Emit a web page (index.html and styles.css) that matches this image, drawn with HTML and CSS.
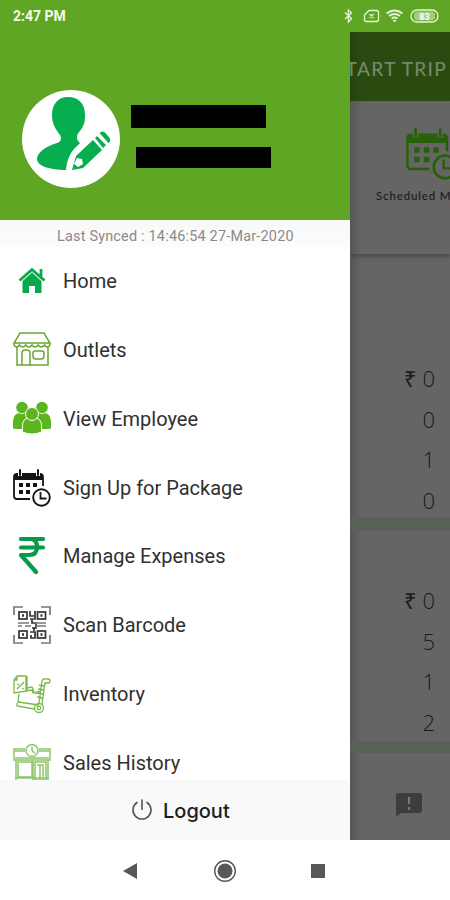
FILE: index.html
```html
<!DOCTYPE html>
<html lang="en">
<head>
<meta charset="utf-8">
<title>Menu</title>
<link rel="stylesheet" href="styles.css">
</head>
<body>
<header class="status">
  <span class="time">2:47 PM</span>
  <svg class="status-icons" width="100" height="18" viewBox="0 0 100 18" fill="none" stroke="#e6f5d8" stroke-width="1.3">
    <path d="M5 5.500l6.500 6-3.200 3.500v-12l3.200 3-6.500 6" />
    <path d="M29 3.500h7.500q2 0 2 2v7q0 2-2 2h-10q-2 0-2-2V8zM29.500 7l4 4m0-4l-4 4" />
    <path d="M46.500 6.500q8-6 16 0M49 9q5.500-4 11 0M51.500 11.500q3-2 6 0" stroke-width="1.800"/>
    <path d="M54.500 15.500l-2-2.500h4z" fill="#e6f5d8" stroke="none"/>
    <rect x="71" y="3" width="27" height="12" rx="6"/>
    <rect x="74" y="4.500" width="21" height="9" rx="4" fill="#a5cd82" stroke="none"/>
    <text x="84.500" y="12.500" class="battery">83</text>
  </svg>
</header>

<div class="stage">
  <aside class="drawer">
    <div class="profile">
      <svg class="avatar" width="98" height="98" viewBox="0 0 98 98">
        <circle cx="49" cy="49" r="49" fill="#fff"/>
        <path fill="#07ae50" d="M46 7C36 7 30 14 30 25c0 9 4 15 8 20 2 3 1 7-3 8-10 3-20 9-20 16 0 7 13 11 29 11 1-9 3-15 8-21l6-6c-2-2-3-3-3-6 0-4 3-5 5-9 3-5 3-8 3-13C63 14 57 7 46 7z"/>
        <path fill="#07ae50" d="M54 66L71 50l9 10-19 18-11 2zM73 48l2-2 9 9-3 3zM77.500 43q3-3 6 0l4 5q2 3-1 5z"/>
        <path fill="#fff" d="M55 68l5 1 1 5-5 3-4-3z"/>
      </svg>
      <div class="redactions"><i class="redacted name"></i><i class="redacted role"></i></div>
    </div>
    <div class="synced"><span>Last Synced : 14:46:54 27-Mar-2020</span></div>

    <nav class="menu">
      <a class="item">
        <svg class="icon" viewBox="0 0 38 38"><path fill="#08a94a" d="M19 9.500l9.500 9V31H22v-7h-6v7H9.500V18.500z"/><path d="M6.500 18.500L19 7.500l12.500 11M28 7v8" fill="none" stroke="#08a94a" stroke-width="2.800"/><path d="M7.500 20.500L19 10.300l11.500 10.200" fill="none" stroke="#fff" stroke-width=".8"/></svg>
        <span>Home</span></a>
      <a class="item">
        <svg class="icon" viewBox="0 0 38 38" fill="none" stroke="#67a82f" stroke-width="1.500"><path d="M7 2h24l6 10H1zM1 12v2q2.500 4 5.500 0 3 4 6.200 0 3 4 6.300 0 3 4 6.200 0 3 4 6.300 0 3 4 5.500 0v-2M4 16.500V34h31V16.500M9 34V22q0-3 3-3h2q3 0 3 3v12M22 20h7q2 0 2 2v3q0 3-3 3h-5q-3 0-3-3v-3q0-2 2-2z"/></svg>
        <span>Outlets</span></a>
      <a class="item">
        <svg class="icon" viewBox="0 0 38 38" fill="#5bb51e"><circle cx="9" cy="7.500" r="5.800"/><circle cx="29" cy="7.500" r="5.800"/><path d="M0 28v-6q0-8 6-9 3 2 6 0l6 3v13H6q-6 0-6-1zM38 28v-6q0-8-6-9-3 2-6 0l-6 3v13h12q6 0 6-1z"/><g stroke="#fff"><path d="M9.500 32V26q0-7.500 6-8h7q6 .5 6 8v6q-9.500 4-19 0z"/><circle cx="19" cy="14" r="6.500"/></g></svg>
        <span>View Employee</span></a>
      <a class="item">
        <svg class="icon" viewBox="0 0 38 38"><use href="#schedule"/></svg>
        <span>Sign Up for Package</span></a>
      <a class="item">
        <svg class="icon" viewBox="0 0 38 38" fill="none" stroke="#079a49" stroke-width="4.200" stroke-linecap="round" stroke-linejoin="round"><path d="M8 2h22M8 10.500h22M11 2h6q7 0 7 8t-8 8H8L23 35"/></svg>
        <span>Manage Expenses</span></a>
      <a class="item">
        <svg class="icon" viewBox="0 0 38 38" fill="none" stroke="#333" stroke-width="1.700"><path d="M1 9V1h9M28 1h9v8M1 29v8h9M28 37h9v-8" stroke="#777"/><rect x="6" y="6" width="8" height="7"/><rect x="24.500" y="6" width="8" height="7"/><rect x="6" y="25" width="8" height="7"/><rect x="24.500" y="25" width="8" height="7"/><path d="M9 9.500h2M27.500 9.500h2M9 28.500h2M27.500 28.500h2" stroke-width="2.500"/><path d="M17 5v5h4M22 5v8h-5M17 26h5v6h-4v-3M19 14v3h4v5h-4M21 22v3"/><path d="M5 17h11M22 17h11M5 20h4m3 0h6m5 0h10" stroke="#777"/></svg>
        <span>Scan Barcode</span></a>
      <a class="item">
        <svg class="icon" viewBox="0 0 38 38" fill="none" stroke="#79b84b" stroke-width="1.300"><path d="M4 1h9v15l6-1 1 3 7-2M4 1L1 5v13l13-2V1M4 1v4H1M4 14l7-7M4 9l2 1M9 13l2 1M14 13l5-1 2 5M6 19l-1 9M22 19l5-2M5 27l21 3M4 28v3l17 3M26 28L29 6q1-3 4-2h3q2 2 0 4h-4l-3 21M26 10l5 1M25 14l6 1M24 18l6 1M24 22l6 1"/><circle cx="26" cy="33" r="4.500"/><circle cx="26" cy="33" r="1.800"/></svg>
        <span>Inventory</span></a>
      <a class="item">
        <svg class="icon" viewBox="0 0 38 38" fill="none" stroke="#8fc46c" stroke-width="1.500"><path d="M12 5H1v11h36V5H26M1 7h11M26 7h11M2 14h34M3 16v20M35 16v20M5 18h14v15H5zM20 17v19M22 18h11v18H22zM24 21h6v14M27 21v14M3 34h32"/><circle cx="19" cy="6.500" r="6"/><path d="M19 2.500v4l3 3"/></svg>
        <span>Sales History</span></a>
    </nav>

    <a class="logout">
      <svg width="22" height="22" viewBox="0 0 22 22" fill="none" stroke="#555" stroke-width="1.600" stroke-linecap="round"><path d="M11 1v9.500M6 3.500a9 9 0 1 0 10 0"/></svg>
      <span>Logout</span>
    </a>
  </aside>

  <main class="page">
    <div class="appbar"><span>START TRIP</span></div>
    <section class="shortcut">
      <svg class="calendar" viewBox="0 0 38 38"><use href="#schedule"/></svg>
      <span>Scheduled Meetings</span>
    </section>
    <section class="stats first"><b>₹ 0</b><b>0</b><b>1</b><b>0</b></section>
    <section class="stats second"><b>₹ 0</b><b>5</b><b>1</b><b>2</b></section>
    <footer class="tabs">
      <svg width="26" height="24" viewBox="0 0 26 24"><path fill="#3d3d3d" d="M2 0h22q2 0 2 2v16q0 2-2 2H5l-5 4V2q0-2 2-2z"/><path d="M13 4v7M13 14v3" stroke="#777" stroke-width="2.200"/></svg>
    </footer>
  </main>
</div>

<footer class="system">
  <svg width="16" height="18" viewBox="0 0 16 18"><path fill="#585858" d="M1 9l14-8v16z"/></svg>
  <svg width="24" height="24" viewBox="0 0 24 24"><circle cx="12" cy="12" r="10.300" fill="none" stroke="#585858" stroke-width="1.400"/><circle cx="12" cy="12" r="7.500" fill="#585858"/></svg>
  <svg width="16" height="16" viewBox="0 0 16 16"><path fill="#585858" d="M1 1h14v14H1z"/></svg>
</footer>

<svg class="defs" width="0" height="0">
  <symbol id="schedule" viewBox="0 0 38 38">
    <path d="M17 30H4q-3 0-3-3V8q0-3 3-3h23q3 0 3 3v9" fill="none" stroke="currentColor" stroke-width="1.800"/>
    <path d="M1 11V7q0-2 3-2h23q3 0 3 2v4z" fill="currentColor"/>
    <path d="M7 1v6M25 1v6" class="ring-gap"/>
    <path d="M7 1v5M25 1v5" stroke="currentColor" stroke-width="2" stroke-linecap="round"/>
    <path d="M6 14h4v4H6zm7 0h4v4h-4zm7 0h4v4h-4zM6 21h4v4H6zm7 0h4v4h-4z" fill="currentColor"/>
    <circle cx="28.500" cy="28.500" r="8.300" fill="none" stroke="currentColor" stroke-width="1.900"/>
    <path d="M27.500 23v6.500h6" fill="none" stroke="currentColor" stroke-width="1.800"/>
  </symbol>
</svg>
</body>
</html>
```
FILE: styles.css
```css
* { box-sizing: border-box; }
body {
  margin: 0;
  width: 450px;
  height: 900px;
  overflow: hidden;
  display: flex;
  flex-direction: column;
  background: #fff;
  font-family: Roboto, sans-serif;
}
svg { display: block; flex: none; }
.defs { display: none; }

.status {
  height: 32px;
  flex: none;
  display: flex;
  align-items: center;
  justify-content: space-between;
  padding: 0 10px 0 13px;
  background: #5ea624;
  color: #f4fbea;
}
.time { font-size: 14px; font-weight: 700; }
.battery { font: 700 9px Roboto, sans-serif; fill: #fff; stroke: none; text-anchor: middle; }

.stage { height: 808px; flex: none; display: flex; }
.drawer { width: 350px; flex: none; display: flex; flex-direction: column; background: #fff; }
.profile {
  height: 188px;
  flex: none;
  display: flex;
  padding: 58px 0 0 22px;
  background: #5ea624;
}
.redactions { padding: 15px 0 0 11px; }
.redacted { display: block; width: 135px; background: #000; }
.name { height: 23px; }
.role { height: 21px; margin: 19px 0 0 5px; }
.synced {
  height: 27px;
  flex: none;
  padding: 8px 0 0 57px;
  background: linear-gradient(#f8f8f8, #fcfcfc);
  color: #8a8a8a;
  font-size: 14.400px;
  letter-spacing: .22px;
  line-height: 18px;
  white-space: nowrap;
}
.menu { flex: 1; min-height: 0; overflow: hidden; }
.item {
  height: 68.750px;
  display: flex;
  align-items: center;
  gap: 12px;
  padding-left: 13px;
  color: #303030;
  font-size: 20px;
}
.icon { width: 38px; height: 38px; color: #151515; }
.ring-gap { stroke: var(--gap, #fff); stroke-width: 4; }
.logout {
  height: 60px;
  flex: none;
  display: flex;
  align-items: center;
  gap: 10px;
  padding-left: 131px;
  background: #f9f9f9;
  color: #1d1d1d;
  font: 500 20px Inter, sans-serif;
}
.logout span { padding-top: 2px; }

.page {
  flex: 1;
  min-width: 0;
  display: flex;
  flex-direction: column;
  overflow: hidden;
  background: linear-gradient(90deg, #565656, #656565 12px);
  color: #1b1b1b;
}
.appbar {
  height: 69px;
  flex: none;
  display: flex;
  align-items: center;
  justify-content: flex-end;
  padding: 4px 3px 0 0;
  overflow: hidden;
  background: linear-gradient(90deg, #25420e, #294b10 12px);
  color: #77866b;
  font: 500 19px Lato, sans-serif;
  letter-spacing: 1.300px;
  white-space: nowrap;
}
.shortcut {
  height: 153px;
  flex: none;
  padding: 27px 0 0 26px;
  box-shadow: 0 2px 4px #444;
  font: 500 11.500px Lato, sans-serif;
  letter-spacing: .85px;
  white-space: nowrap;
}
.calendar { --gap: #656565; width: 52px; height: 52px; margin: 0 0 9px 30px; color: #286009; }
.stats {
  flex: none;
  display: flex;
  flex-direction: column;
  align-items: flex-end;
  padding-right: 15px;
  border-bottom: 12px solid #596057;
}
.stats b { height: 40.700px; font: 300 22px/40.700px "Open Sans", sans-serif; }
.first { height: 276px; padding-top: 104px; }
.second { height: 223px; padding-top: 50px; }
.tabs { flex: 1; padding: 40px 0 0 46px; }

.system {
  flex: 1;
  display: flex;
  align-items: center;
  justify-content: space-between;
  padding: 2px 124px 0 122px;
}
.system svg:nth-child(2) { margin-left: 2px; }
```
